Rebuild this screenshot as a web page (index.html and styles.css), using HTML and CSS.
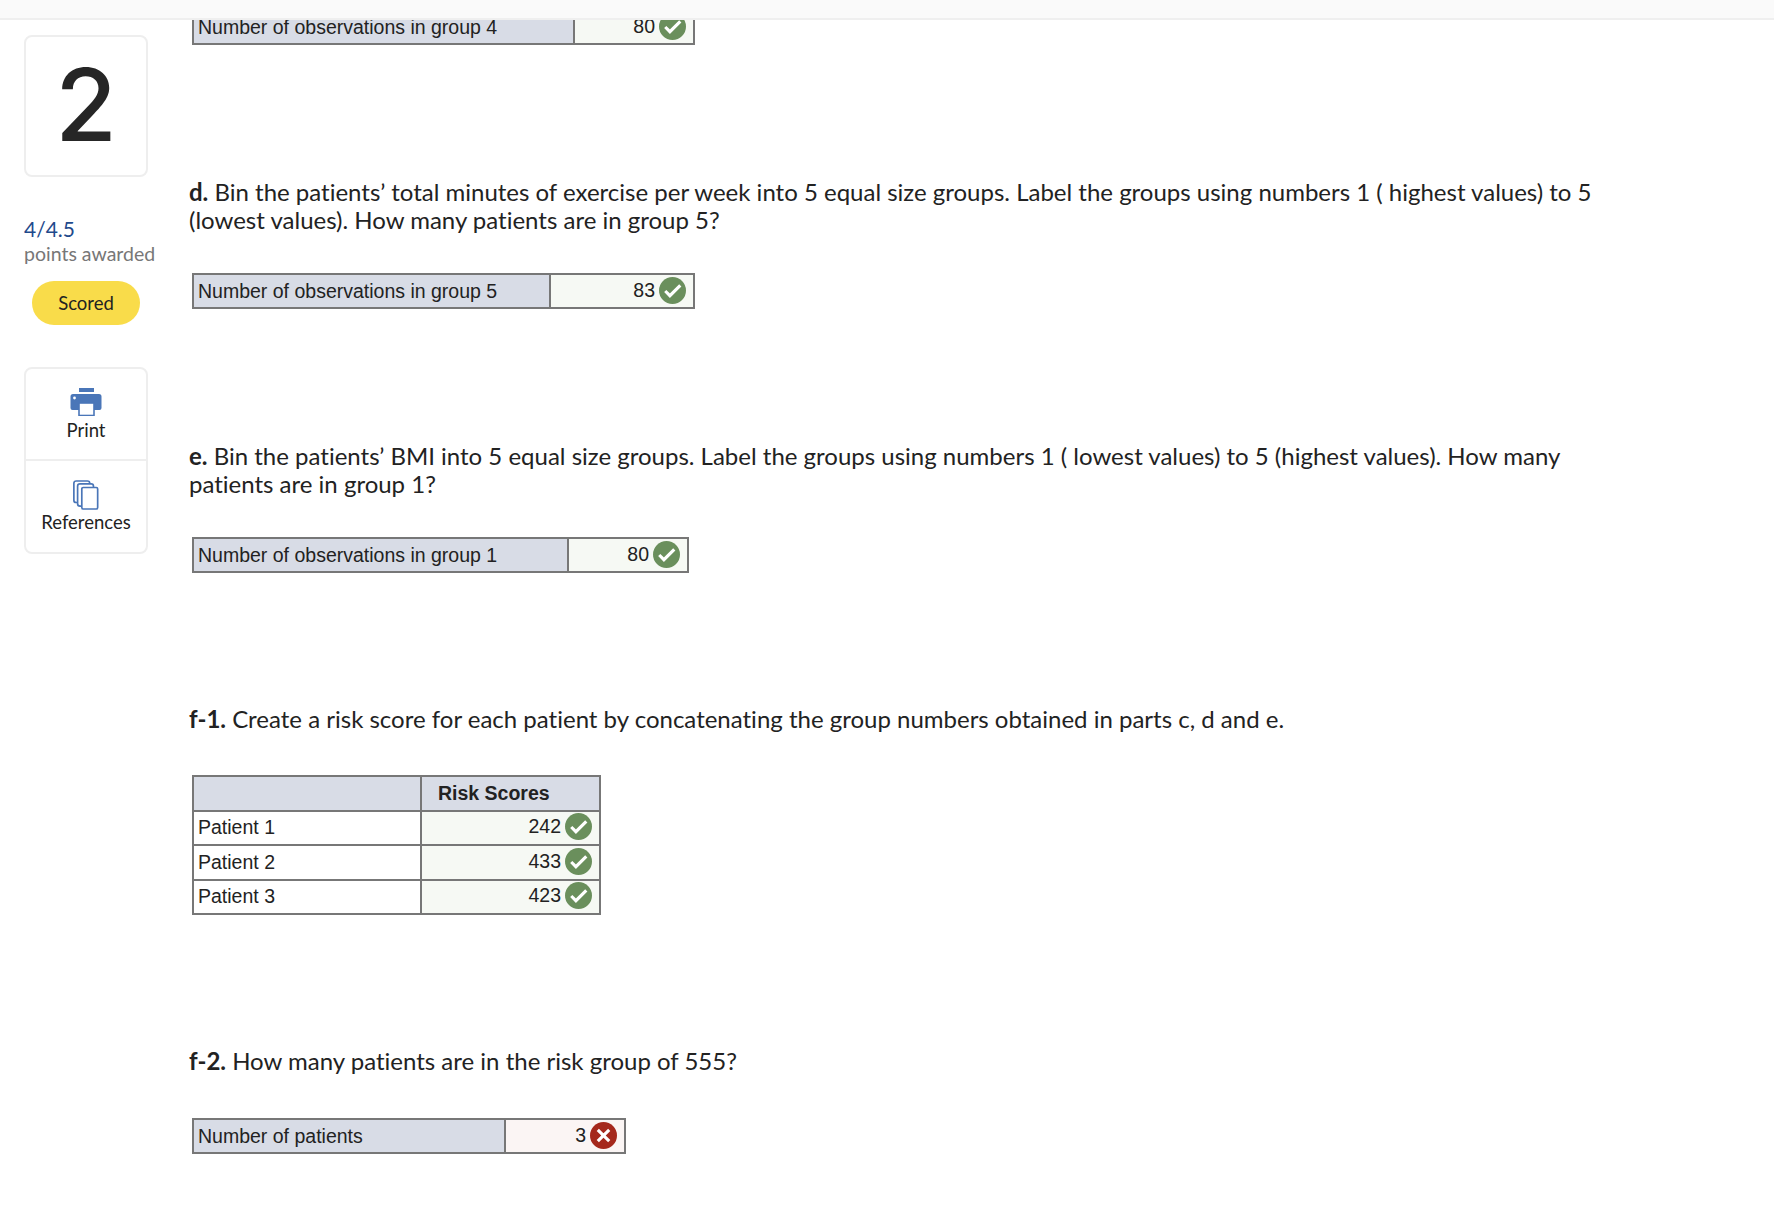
FILE: index.html
```html
<!DOCTYPE html>
<html lang="en">
<head>
<meta charset="utf-8">
<title>Question 2</title>
<link rel="stylesheet" href="styles.css">
</head>
<body>
<header class="topbar"></header>
<div class="layout">
  <aside class="sidebar">
    <div class="number-card">2</div>
    <div class="score">4/4.5</div>
    <div class="score-label">points awarded</div>
    <div class="pill">Scored</div>
    <div class="tools">
      <div class="tool tool-first">
        <svg class="tool-icon" width="32" height="28" viewBox="0 0 32 28"><rect x="9" y="0" width="15" height="4" fill="#4a76b8"/><path d="M3 6h26a2.500 2.500 0 0 1 2.500 2.500V20a2 2 0 0 1-2 2H2.500a2 2 0 0 1-2-2V8.500A2.500 2.500 0 0 1 3 6z" fill="#4a76b8"/><circle cx="4.500" cy="10" r="1.400" fill="#fff"/><rect x="9" y="15" width="15" height="12.500" fill="#fff" stroke="#4a76b8" stroke-width="1.600"/></svg>
        <span>Print</span>
      </div>
      <div class="tool tool-refs">
        <svg class="tool-icon" width="28" height="30" viewBox="0 0 30 32" fill="#fff" stroke="#4a76b8" stroke-width="1.800"><rect x="2" y="1" width="17" height="23" rx="2.500"/><rect x="6" y="4" width="17" height="24" rx="2.500"/><rect x="10.500" y="8" width="17" height="23" rx="1.500"/></svg>
        <span>References</span>
      </div>
    </div>
  </aside>
  <main class="content">
    <table class="grid grid-g4">
      <tr><td class="head">Number of observations in group 4</td><td class="val ok">80<svg class="mark" viewBox="0 0 26 26"><circle cx="13" cy="13" r="13" fill="#6a8f5c"/><path d="M6 13.500l4.500 4.500L20.500 8" fill="none" stroke="#fff" stroke-width="3"/></svg></td></tr>
    </table>

    <section class="part part-d">
      <p class="question"><b>d.</b> Bin the patients’ total minutes of exercise per week into 5 equal size groups. Label the groups using numbers 1 ( highest values) to 5 (lowest values). How many patients are in group 5?</p>
      <table class="grid grid-g5">
        <tr><td class="head">Number of observations in group 5</td><td class="val ok">83<svg class="mark" viewBox="0 0 26 26"><circle cx="13" cy="13" r="13" fill="#6a8f5c"/><path d="M6 13.500l4.500 4.500L20.500 8" fill="none" stroke="#fff" stroke-width="3"/></svg></td></tr>
      </table>
    </section>

    <section class="part part-e">
      <p class="question"><b>e.</b> Bin the patients’ BMI into 5 equal size groups. Label the groups using numbers 1 ( lowest values) to 5 (highest values). How many patients are in group 1?</p>
      <table class="grid grid-g1">
        <tr><td class="head">Number of observations in group 1</td><td class="val ok">80<svg class="mark" viewBox="0 0 26 26"><circle cx="13" cy="13" r="13" fill="#6a8f5c"/><path d="M6 13.500l4.500 4.500L20.500 8" fill="none" stroke="#fff" stroke-width="3"/></svg></td></tr>
      </table>
    </section>

    <section class="part part-f1">
      <p class="question q-f1"><b>f-1.</b> Create a risk score for each patient by concatenating the group numbers obtained in parts c, d and e.</p>
      <table class="grid grid-risk">
        <tr><td class="head"></td><td class="head col-title">Risk Scores</td></tr>
        <tr><td>Patient 1</td><td class="val ok">242<svg class="mark" viewBox="0 0 26 26"><circle cx="13" cy="13" r="13" fill="#6a8f5c"/><path d="M6 13.500l4.500 4.500L20.500 8" fill="none" stroke="#fff" stroke-width="3"/></svg></td></tr>
        <tr><td>Patient 2</td><td class="val ok">433<svg class="mark" viewBox="0 0 26 26"><circle cx="13" cy="13" r="13" fill="#6a8f5c"/><path d="M6 13.500l4.500 4.500L20.500 8" fill="none" stroke="#fff" stroke-width="3"/></svg></td></tr>
        <tr><td>Patient 3</td><td class="val ok">423<svg class="mark" viewBox="0 0 26 26"><circle cx="13" cy="13" r="13" fill="#6a8f5c"/><path d="M6 13.500l4.500 4.500L20.500 8" fill="none" stroke="#fff" stroke-width="3"/></svg></td></tr>
      </table>
    </section>

    <section class="part part-f2">
      <p class="question q-f2"><b>f-2.</b> How many patients are in the risk group of 555?</p>
      <table class="grid grid-pat">
        <tr><td class="head">Number of patients</td><td class="val bad">3<svg class="mark" viewBox="0 0 26 26"><circle cx="13" cy="13" r="13" fill="#a5281c"/><path d="M7.500 7.500l11 11M18.500 7.500l-11 11" fill="none" stroke="#fff" stroke-width="3"/></svg></td></tr>
      </table>
    </section>
  </main>
</div>
</body>
</html>
```
FILE: styles.css
```css
* { box-sizing: border-box; }
html, body { margin: 0; padding: 0; background: #fff; }
body {
  height: 1219px;
  overflow: hidden;
  font-family: "Lato", "Liberation Sans", sans-serif;
  font-variant-ligatures: none;
  color: #222;
}
.topbar {
  height: 20px;
  background: #fafafa;
  border-bottom: 2px solid #efefef;
  position: relative;
  z-index: 2;
}
.layout { display: flex; align-items: flex-start; }
.sidebar {
  width: 165px;
  flex: none;
  padding: 15px 0 0 24px;
}
.number-card {
  width: 124px;
  height: 142px;
  padding-bottom: 2px;
  border: 2px solid #eee;
  border-radius: 8px;
  display: flex;
  align-items: center;
  justify-content: center;
  font-family: "Inter", "Lato", sans-serif;
  font-weight: 500;
  font-size: 100px;
  line-height: 1;
  color: #262626;
}
.score {
  margin-top: 39px;
  font-size: 21px;
  line-height: 26px;
  color: #1f4a8c;
}
.score-label {
  font-size: 19.500px;
  line-height: 24px;
  color: #777;
  white-space: nowrap;
}
.pill {
  margin: 15px 0 0 8px;
  width: 108px;
  height: 44px;
  border-radius: 22px;
  background: #f9dc4a;
  display: flex;
  align-items: center;
  justify-content: center;
  font-size: 18.500px;
}
.tools {
  margin-top: 42px;
  width: 124px;
  border: 2px solid #eee;
  border-radius: 8px;
  font-size: 18.500px;
}
.tool {
  height: 91px;
  display: flex;
  flex-direction: column;
  align-items: center;
  padding-top: 19px;
  gap: 1px;
}
.tool span { line-height: 22px; }
.tool-first { height: 92px; padding-top: 19px; gap: 3px; border-bottom: 2px solid #eee; }
.tool-icon { display: block; flex: none; }
.content {
  flex: 1;
  min-width: 0;
  margin-top: -11px;
  padding-left: 24px;
}
.grid {
  border-collapse: collapse;
  table-layout: fixed;
  margin-left: 3px;
  border: 2px solid #777;
  font-family: "Liberation Sans", Arial, sans-serif;
  font-size: 19.500px;
  color: #222;
}
.grid td {
  border: 2px solid #777;
  height: 34px;
  padding: 0 7px 0 4px;
  white-space: nowrap;
}
.grid-risk td { height: 34.500px; }
.grid .head { background: #d8dce6; }
.grid .col-title { font-weight: 700; text-align: left; padding-left: 16px; }
.grid .val { text-align: right; }
.grid .ok { background: #f6f9f4; }
.grid .bad { background: #fbf5f4; }
.mark {
  width: 27px;
  height: 27px;
  margin-left: 4px;
  vertical-align: middle;
  position: relative;
  top: -1px;
}
.grid-g4 { width: 503px; }
.grid-g4 td:first-child { width: 381px; }
.grid-g5 { width: 503px; }
.grid-g5 td:first-child { width: 357px; }
.grid-g1 { width: 497px; }
.grid-g1 td:first-child { width: 375px; }
.grid-risk { width: 409px; }
.grid-risk td:first-child { width: 228px; }
.grid-pat { width: 434px; }
.grid-pat td:first-child { width: 312px; }
.part-d { margin-top: 133px; }
.part-e { margin-top: 133px; }
.part-f1 { margin-top: 132px; }
.part-f2 { margin-top: 132px; }
.question {
  margin: 0 0 39px;
  width: 1460px;
  font-size: 24px;
  line-height: 28px;
  color: #222;
}
.q-f1 { margin-bottom: 42px; }
.q-f2 { margin-bottom: 43px; }
.question b { font-weight: 700; }
```
